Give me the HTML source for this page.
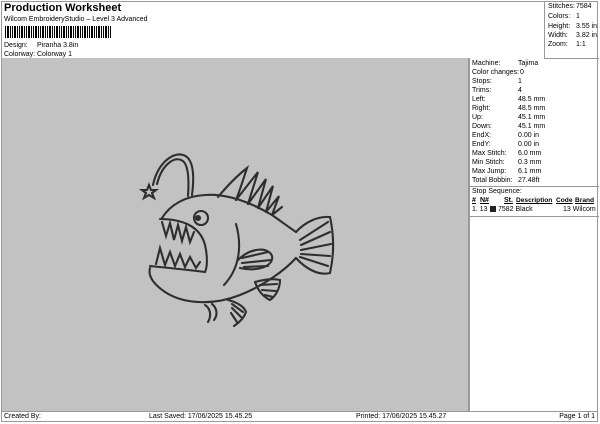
<!DOCTYPE html>
<html><head><style>
body{margin:0;width:600px;height:424px;background:#fff;font-family:"Liberation Sans",Arial,sans-serif;font-size:7px;color:#000;position:relative;overflow:hidden}
.a{position:absolute;white-space:nowrap}
.frame{position:absolute;left:1px;top:1px;width:597px;height:421px;border:1px solid #999;box-sizing:border-box}
.grey{position:absolute;left:2px;top:58px;width:466px;height:353px;background:#c2c2c2;border-right:1px solid #999}
.tr{position:absolute;left:544px;top:1px;width:54px;height:57px;border-left:1px solid #999;border-bottom:1px solid #999}
.rp{position:absolute;left:469px;top:58px;width:129px;height:353px;border-left:1px solid #999}
.row{position:absolute;left:2px}
.foot{position:absolute;left:1px;top:411px;width:597px;height:11px;border-top:1px solid #999}
</style></head><body>
<div class="frame"></div>
<div class="a" style="left:4px;top:2px;font-size:11px;font-weight:bold">Production Worksheet</div>
<div class="a" style="left:4px;top:16px">Wilcom EmbroideryStudio – Level 3 Advanced</div>
<div class="a" style="left:5px;top:26px;width:106px;height:12px;background:repeating-linear-gradient(90deg,#000 0 1px,#fff 1px 2px,#000 2px 4px,#fff 4px 5px,#000 5px 6px,#fff 6px 7px)"></div>
<div class="a" style="left:4px;top:42px">Design:</div><div class="a" style="left:37px;top:42px">Piranha 3.8in</div>
<div class="a" style="left:4px;top:51px">Colorway:</div><div class="a" style="left:37px;top:51px">Colorway 1</div>
<div class="tr">
<div class="a" style="left:3px;top:2px">Stitches:</div><div class="a" style="left:31px;top:2px">7584</div>
<div class="a" style="left:3px;top:12px">Colors:</div><div class="a" style="left:31px;top:12px">1</div>
<div class="a" style="left:3px;top:22px">Height:</div><div class="a" style="left:31px;top:22px">3.55 in</div>
<div class="a" style="left:3px;top:31px">Width:</div><div class="a" style="left:31px;top:31px">3.82 in</div>
<div class="a" style="left:3px;top:40px">Zoom:</div><div class="a" style="left:31px;top:40px">1:1</div>
</div>
<div class="grey"></div>
<svg class="a" style="left:0;top:0" width="600" height="424" viewBox="0 0 600 424" fill="none" stroke="#2e2e2e" stroke-width="2.1" stroke-linecap="round">
<path d="M149 185 L151 190 L156 190 L152 193 L154 198 L149 195 L144 198 L146 193 L142 190 L147 190 Z"/>
<path d="M153 185 C158 160 178 148 188 158 C194 165 194 180 192 195"/>
<path d="M157 184 C162 164 176 154 184 162 C189 168 189 182 188 196"/>
<path d="M162 218 C170 205 185 196 205 195 C230 193 255 205 272 215 C282 222 290 228 296 232"/>
<path d="M296 232 C305 222 318 216 330 217 C334 235 334 255 330 273 C318 276 305 268 296 258"/>
<path d="M300 240 L328 222 M301 245 L330 232 M301 250 L331 244 M301 254 L330 256 M300 257 L328 266"/>
<path d="M296 258 C285 270 265 285 240 295 C215 305 185 305 165 292 C152 283 148 275 150 268"/>
<path d="M150 266 C170 268 190 270 205 272"/>
<path d="M160 219 C180 219 200 225 205 245 C208 258 207 268 205 272"/>
<path d="M162 222 L166 236 L170 223 L174 240 L178 225 L182 241 L186 227 L190 242 L194 232"/>
<path d="M156 264 L160 248 L165 265 L170 252 L175 266 L180 254 L185 267 L190 257 L196 268 L200 262"/>
<circle cx="201" cy="218" r="7"/><circle cx="198" cy="218" r="2" fill="#2e2e2e"/>
<path d="M236 224 C242 245 240 268 224 285"/>
<path d="M238 260 C250 248 268 246 272 256 C274 266 258 272 240 268"/>
<path d="M242 258 L268 252 M242 263 L271 260 M244 267 L268 266"/>
<path d="M218 197 C228 185 238 175 247 168 C243 180 240 190 236 200"/>
<path d="M236 200 L258 172 L248 204 M248 204 L266 179 L258 208 M258 208 L273 186 L266 212 M266 212 L279 196 L272 215 M272 215 L282 207"/>
<path d="M255 282 C262 280 272 278 280 280 C280 288 276 296 270 300 C262 296 258 290 255 282"/>
<path d="M260 285 L277 284 M262 290 L276 291 M265 295 L273 297"/>
<path d="M228 300 C236 302 244 306 246 312 C244 318 240 322 234 326"/>
<path d="M232 304 L243 312 M232 308 L241 317 M231 313 L237 322"/>
<path d="M205 305 C210 308 212 315 208 322 M212 304 C217 308 218 315 214 320"/>
</svg>
<div class="rp">
<div class="row" style="top:2px">Machine:</div><div class="a" style="left:48px;top:2px">Tajima</div>
<div class="row" style="top:11px">Color changes:</div><div class="a" style="left:50px;top:11px">0</div>
<div class="row" style="top:20px">Stops:</div><div class="a" style="left:48px;top:20px">1</div>
<div class="row" style="top:29px">Trims:</div><div class="a" style="left:48px;top:29px">4</div>
<div class="row" style="top:38px">Left:</div><div class="a" style="left:48px;top:38px">48.5 mm</div>
<div class="row" style="top:47px">Right:</div><div class="a" style="left:48px;top:47px">48.5 mm</div>
<div class="row" style="top:56px">Up:</div><div class="a" style="left:48px;top:56px">45.1 mm</div>
<div class="row" style="top:65px">Down:</div><div class="a" style="left:48px;top:65px">45.1 mm</div>
<div class="row" style="top:74px">EndX:</div><div class="a" style="left:48px;top:74px">0.00 in</div>
<div class="row" style="top:83px">EndY:</div><div class="a" style="left:48px;top:83px">0.00 in</div>
<div class="row" style="top:92px">Max Stitch:</div><div class="a" style="left:48px;top:92px">6.0 mm</div>
<div class="row" style="top:101px">Min Stitch:</div><div class="a" style="left:48px;top:101px">0.3 mm</div>
<div class="row" style="top:110px">Max Jump:</div><div class="a" style="left:48px;top:110px">6.1 mm</div>
<div class="row" style="top:119px">Total Bobbin:</div><div class="a" style="left:48px;top:119px">27.48ft</div>
<div class="a" style="left:0;top:128px;width:129px;border-top:1px solid #999"></div>
<div class="row" style="top:130px">Stop Sequence:</div>
<div class="row" style="top:139px;font-weight:bold;text-decoration:underline">#</div>
<div class="a" style="left:10px;top:139px;font-weight:bold;text-decoration:underline">N#</div>
<div class="a" style="left:34px;top:139px;font-weight:bold;text-decoration:underline">St.</div>
<div class="a" style="left:46px;top:139px;font-weight:bold;text-decoration:underline;font-size:6.6px">Description</div>
<div class="a" style="left:86px;top:139px;font-weight:bold;text-decoration:underline;font-size:6.6px">Code</div>
<div class="a" style="left:105px;top:139px;font-weight:bold;text-decoration:underline;font-size:6.6px">Brand</div>
<div class="row" style="top:148px">1. 13</div>
<div class="a" style="left:20px;top:148px;width:6px;height:6px;background:#222"></div>
<div class="a" style="left:28px;top:148px">7582 Black</div>
<div class="a" style="left:93px;top:148px">13 Wilcom</div>
<div class="a" style="left:0;top:158px;width:129px;border-top:1px solid #999"></div>
</div>
<div class="foot">
<div class="a" style="left:3px;top:1px">Created By:</div>
<div class="a" style="left:148px;top:1px">Last Saved: 17/06/2025 15.45.25</div>
<div class="a" style="left:355px;top:1px">Printed: 17/06/2025 15.45.27</div>
<div class="a" style="right:3px;top:1px">Page 1 of 1</div>
</div>
</body></html>
